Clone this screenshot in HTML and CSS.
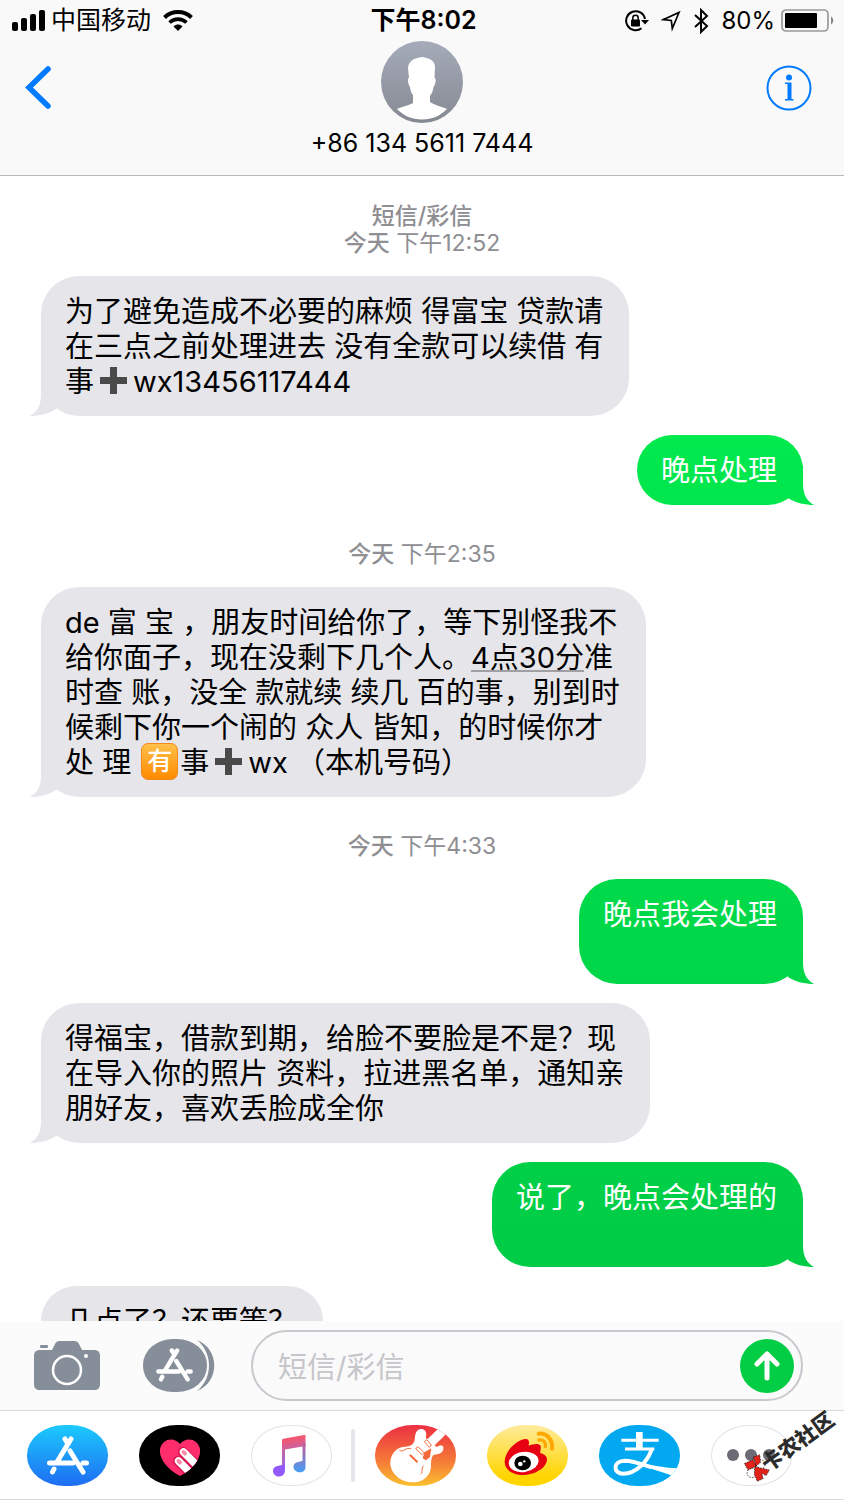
FILE: index.html
```html
<!DOCTYPE html>
<html lang="zh-CN">
<head>
    <meta charset="UTF-8">
    <meta name="viewport" content="width=device-width, initial-scale=1.0">
    <title>短信/彩信</title>
    <link rel="stylesheet" href="styles.css">
</head>
<body>
    <!-- Shared icon shapes -->
    <svg class="defs" aria-hidden="true">
        <symbol id="appstoreMark" viewBox="20 9 42 40">
            <path d="M44 13L30 36M38 13l3 5M43 25l13 21M22.500 37H46M56 37h3.500M27 43l-1.500 3" fill="none" stroke="#fff" stroke-width="5" stroke-linecap="round"/>
        </symbol>
        <symbol id="plusMark" viewBox="0 0 27 27">
            <path d="M10 0h7v10h10v7H17v10h-7V17H0v-7h10z" fill="#4a4a4a"/>
        </symbol>
    </svg>

    <header class="top">
        <div class="status-bar">
            <div class="status-left">
                <svg width="34" height="22" viewBox="0 0 34 22" aria-hidden="true">
                    <rect x="0" y="12" width="6" height="9" rx="2"/>
                    <rect x="9" y="8" width="6" height="13" rx="2"/>
                    <rect x="18" y="4" width="6" height="17" rx="2"/>
                    <rect x="27" y="0" width="6" height="21" rx="2"/>
                </svg>
                <span class="carrier">中国移动</span>
                <svg width="30" height="22" viewBox="0 0 30 22" aria-hidden="true">
                    <path d="M1.500 7.500C9 .300 21 .300 28.500 7.500" fill="none" stroke="#000" stroke-width="4"/>
                    <path d="M6.500 12.500c5-4.500 12-4.500 17 0" fill="none" stroke="#000" stroke-width="3.600"/>
                    <path d="M10.500 16.500c3-2.600 6-2.600 9 0L15 21z"/>
                </svg>
            </div>
            <span class="clock">下午8:02</span>
            <div class="status-right">
                <svg width="24" height="22" viewBox="0 0 24 22" aria-hidden="true">
                    <path d="M16.500 18.200A9.500 9.500 0 1 1 20 9" fill="none" stroke="#000" stroke-width="2"/>
                    <path d="M16 10h8l-4 4.500z"/>
                    <rect x="6" y="9.500" width="9" height="7" rx="1"/>
                    <path d="M7.800 10V8a2.700 2.700 0 0 1 5.400 0v2" fill="none" stroke="#000" stroke-width="1.500"/>
                </svg>
                <svg width="20" height="22" viewBox="0 0 20 22" aria-hidden="true">
                    <path d="M2 9.700L18 2.500 11.300 18.500 10.300 10.500z" fill="none" stroke="#000" stroke-width="1.700"/>
                </svg>
                <svg width="16" height="26" viewBox="0 0 16 26" aria-hidden="true">
                    <path d="M2 7l12 11-6 6V2l6 6L2 19" fill="none" stroke="#000" stroke-width="2"/>
                </svg>
                <span class="percent">80%</span>
                <svg width="54" height="24" viewBox="0 0 54 24" aria-hidden="true">
                    <rect x="1" y="1" width="46" height="21" rx="4" fill="none" stroke="#999" stroke-width="1.700"/>
                    <rect x="4" y="4" width="32" height="15" rx="1"/>
                    <path d="M50 7.500c3 1.500 3 6.500 0 8z" fill="#888"/>
                </svg>
            </div>
        </div>

        <nav class="nav-bar">
            <button type="button" class="nav-button" aria-label="返回">
                <svg width="28" height="44" viewBox="0 0 28 44">
                    <path d="M24 4L5 22.500l19 18.500" fill="none" stroke="#007aff" stroke-width="5.500" stroke-linecap="round"/>
                </svg>
            </button>
            <div class="contact">
                <svg width="82" height="82" viewBox="0 0 82 82" aria-hidden="true">
                    <defs>
                        <linearGradient id="avatarFill" x1="0" y1="0" x2="0" y2="1">
                            <stop offset="0" stop-color="#a5abb9"/>
                            <stop offset="1" stop-color="#858992"/>
                        </linearGradient>
                    </defs>
                    <circle cx="41" cy="41" r="41" fill="url(#avatarFill)"/>
                    <path d="M41 16C49 17 54 20 54 26L53.500 37C55.500 37 55 43 52.500 46C52 50 51 52 49 55V61C53 64 62 66 66 68C59 75 51 78.500 41 78.500S23 75 16 68C20 66 29 64 32 62V54C30 52 29.500 49 29 46C27 43 26 37 28 37L27 27C27.500 20 33 17 41 16Z" fill="#fff"/>
                </svg>
                <span class="number">+86 134 5611 7444</span>
            </div>
            <button type="button" class="nav-button info" aria-label="详细信息">
                <svg width="46" height="46" viewBox="0 0 46 46">
                    <circle cx="23" cy="23" r="21.500" fill="none" stroke="#007aff" stroke-width="2"/>
                    <circle cx="23" cy="12.500" r="3" fill="#007aff"/>
                    <path d="M19 17.500h6.500v16.500H27.500V35.500h-8.500v-1.500h2.500V19H19z" fill="#007aff"/>
                </svg>
            </button>
        </nav>
    </header>

    <main class="chat">
        <p class="stamp"><b>短信/彩信</b><br><b>今天</b> 下午12:52</p>
        <div class="bubble received">为了避免造成不必要的麻烦 得富宝 贷款请<br>在三点之前处理进去 没有全款可以续借 有<br>事<svg class="plus" role="img" aria-label="加"><use href="#plusMark"/></svg>wx13456117444</div>
        <div class="bubble sent">晚点处理</div>

        <p class="stamp"><b>今天</b> 下午2:35</p>
        <div class="bubble received">de 富 宝 ，朋友时间给你了，等下别怪我不<br>给你面子，现在没剩下几个人。<a href="#">4点30分</a>准<br>时查 账，没全 款就续 续几 百的事，别到时<br>候剩下你一个闹的 众人 皆知，的时候你才<br>处 理 <span class="tile">有</span>事<svg class="plus" role="img" aria-label="加"><use href="#plusMark"/></svg>wx （本机号码）</div>

        <p class="stamp"><b>今天</b> 下午4:33</p>
        <div class="bubble sent">晚点我会处理<br><br></div>
        <div class="bubble received">得福宝，借款到期，给脸不要脸是不是？现<br>在导入你的照片 资料，拉进黑名单，通知亲<br>朋好友，喜欢丢脸成全你</div>
        <div class="bubble sent">说了，晚点会处理的<br><br></div>
        <div class="bubble received">几点了？还要等？</div>
    </main>

    <form class="composer">
        <button type="button" class="tool" aria-label="相机">
            <svg width="66" height="50" viewBox="0 0 66 50">
                <path d="M6 9h12l3-6c1-2 2-3 5-3h14c3 0 4 1 5 3l3 6h12c4 0 6 2 6 6v28c0 4-2 6-6 6H6c-4 0-6-2-6-6V15c0-4 2-6 6-6z" fill="#868e99"/>
                <rect x="6" y="4" width="8" height="3" rx="1" fill="#868e99"/>
                <circle cx="33" cy="29" r="14" fill="none" stroke="#fff" stroke-width="2.500"/>
                <circle cx="52" cy="15" r="2" fill="#fff"/>
            </svg>
        </button>
        <button type="button" class="tool apps-toggle" aria-label="App">
            <svg width="72" height="53" viewBox="0 0 72 53">
                <rect width="64" height="53" rx="30" ry="26" fill="#868e99"/>
                <path d="M54 1c23 9 23 42 0 51 16-13 16-38 0-51z" fill="#868e99"/>
                <use href="#appstoreMark" x="13" y="8" width="37" height="35"/>
            </svg>
        </button>
        <div class="field">
            <input type="text" aria-label="短信/彩信" placeholder="短信/彩信">
            <button type="submit" class="send" aria-label="发送">
                <svg width="54" height="54" viewBox="0 0 54 54">
                    <circle cx="27" cy="27" r="27" fill="#03cc45"/>
                    <path d="M27 39V15M17 25l10-10 10 10" fill="none" stroke="#fff" stroke-width="5" stroke-linecap="round" stroke-linejoin="round"/>
                </svg>
            </button>
        </div>
    </form>

    <footer class="app-strip">
        <button type="button" class="app store" aria-label="App Store">
            <svg viewBox="0 0 81 61"><use href="#appstoreMark" x="20" y="10" width="42" height="40"/></svg>
        </button>
        <button type="button" class="app touch" aria-label="Digital Touch">
            <svg viewBox="0 0 81 61">
                <clipPath id="heartClip"><path d="M41 19c4-5 11-6 16-2 7 6 4 16-1 22-4 5-9 9-15 12-6-3-11-7-15-12-5-6-8-16-1-22 5-4 12-3 16 2z"/></clipPath>
                <g clip-path="url(#heartClip)">
                    <rect width="81" height="61" fill="#ff2d6c"/>
                    <path d="M44 27l16 16M39 36l16 16" stroke="#d91550" stroke-width="10" stroke-linecap="round"/>
                    <path d="M44.500 27l16 16M39.500 36l16 16" stroke="#fff" stroke-width="7.500" stroke-linecap="round"/>
                    <path d="M44.500 27l1.500 1.500M39.500 36l1.500 1.500" stroke="#ff8fab" stroke-width="4" stroke-linecap="round"/>
                </g>
            </svg>
        </button>
        <button type="button" class="app light" aria-label="音乐">
            <svg viewBox="0 0 81 61">
                <defs>
                    <linearGradient id="noteFill" gradientUnits="userSpaceOnUse" x1="35" y1="12" x2="41" y2="50">
                        <stop offset="0" stop-color="#fb5366"/>
                        <stop offset=".45" stop-color="#b868b8"/>
                        <stop offset="1" stop-color="#8b62f5"/>
                    </linearGradient>
                    <linearGradient id="stemFill" x1="0" y1="0" x2="0" y2="1">
                        <stop offset="0" stop-color="#c35b95"/>
                        <stop offset="1" stop-color="#459ff8"/>
                    </linearGradient>
                </defs>
                <path d="M31 15.500c0-1 .500-1.500 1.500-1.700L53 10c1 0 1.500 0 1.500 1v10L34 24.500V45h-3z" fill="url(#noteFill)"/>
                <path d="M51.500 18h3v24c0 8-12 6-12 0 0-5 5-5 9-6z" fill="url(#stemFill)"/>
                <path d="M31 40h3v5c0 9-12 8-12 1 0-5 5-5 9-6z" fill="#9459fb"/>
            </svg>
        </button>
        <span class="divider"></span>
        <button type="button" class="app garage" aria-label="库乐队">
            <svg viewBox="15 30 243 183">
                <path d="M61 140C63 112 84 95 106 95C120 95 130 90 134 76C135 54 140 42 154 42C168 43 171 55 167 69L173 72L212 34L234 52L194 91L199 96C207 91 217 89 220 96C222 110 211 119 192 119C184 123 183 138 183 155C181 184 158 203 126 202C88 200 59 172 61 140Z" fill="#fff"/>
                <g fill="none" stroke="#f4693b" stroke-width="3">
                    <path d="M88 106C100 114 108 94 124 102M152 178C160 172 152 162 161 152"/>
                    <path d="M121 121L141 140" stroke-width="6" stroke-linecap="round"/>
                    <path d="M137 101L144 95L162 113L156 119ZM163 80L170 74L184 90L178 97Z"/>
                </g>
                <path d="M163 112L184 100L180 126L168 136L158 130Z" fill="#f4693b"/>
            </svg>
        </button>
        <button type="button" class="app weibo" aria-label="微博">
            <svg viewBox="197 345 243 183">
                <path d="M250 455c0-30 35-67 65-68 12 3 7 16 7 20 13-5 30-9 36 1 2 7-3 17-1 22 13 2 21 10 20 20-3 25-37 45-74 45-31 0-53-17-53-40z" fill="#e60012"/>
                <ellipse cx="307" cy="456" rx="45" ry="30" fill="#fff" transform="rotate(-8 307 456)"/>
                <ellipse cx="304" cy="459" rx="25" ry="22"/>
                <circle cx="297" cy="462" r="7" fill="#fff"/>
                <circle cx="309" cy="454" r="3.500" fill="#fff"/>
                <path d="M352 371c24-3 43 18 40 45" fill="none" stroke="#ffa800" stroke-width="12" stroke-linecap="round"/>
                <path d="M353 390c13-2 21 7 19 20" fill="none" stroke="#ffa800" stroke-width="10" stroke-linecap="round"/>
            </svg>
        </button>
        <button type="button" class="app alipay" aria-label="支付宝">
            <svg viewBox="533 345 243 183">
                <g fill="none" stroke="#fff">
                    <path d="M600 391h112M611 417h88" stroke-width="9"/>
                    <path d="M654 366v50" stroke-width="20"/>
                    <path d="M692 415c-13 42-50 76-86 76-32 0-32-38 4-39 25 0 50 10 80 20" stroke-width="12"/>
                </g>
                <path d="M650 455c40 12 80 18 122 20l-18 22c-40-14-75-25-110-36z" fill="#fff"/>
            </svg>
        </button>
        <button type="button" class="app light" aria-label="更多">
            <svg viewBox="0 0 81 61" fill="#6b6a75">
                <circle cx="22" cy="30" r="6"/><circle cx="40" cy="30" r="6"/><circle cx="58" cy="30" r="6"/>
            </svg>
        </button>
    </footer>

    <div class="watermark">
        <svg width="28" height="28" viewBox="130 163 80 82" aria-hidden="true">
            <g stroke="#111" stroke-width="2" stroke-dasharray="5 3">
                <circle cx="181" cy="193" r="13" fill="#fff"/>
                <circle cx="155" cy="218" r="14" fill="#fff"/>
                <path d="M133 191L158 180L168 198L144 210ZM159 172L178 165L180 188L167 198ZM164 200L206 210L197 226L184 220L188 235L171 243L162 222Z" fill="#e2231a"/>
            </g>
        </svg>
        <span>卡农社区</span>
    </div>
</body>
</html>
```
FILE: styles.css
```css
* {
    box-sizing: border-box;
}
body {
    margin: 0;
    height: 100vh;
    display: flex;
    flex-direction: column;
    position: relative;
    overflow: hidden;
    background-color: #fff;
    color: #000;
    font-family: Inter, "Noto Sans CJK SC", sans-serif;
}
button {
    padding: 0;
    border: none;
    background: none;
    cursor: pointer;
}
svg {
    display: block;
}
.defs {
    position: absolute;
    width: 0;
    height: 0;
}

/* Header */
.top {
    background-color: #f9f9f9;
    border-bottom: 1px solid #b9b9bb;
}
.status-bar {
    display: grid;
    grid-template-columns: 1fr auto 1fr;
    align-items: center;
    height: 41px;
    padding: 0 9px 0 12px;
    font-size: 25px;
    line-height: 41px;
}
.status-left,
.status-right {
    display: flex;
    align-items: center;
}
.carrier {
    margin: 0 12px 0 5px;
}
.clock {
    font-weight: 600;
}
.status-right {
    justify-content: flex-end;
    gap: 12px;
}
.percent {
    margin-right: -6px;
    font-size: 24px;
}
.nav-bar {
    display: flex;
    align-items: flex-start;
    height: 134px;
}
/* equal widths on both sides keep the contact in the middle */
.nav-button {
    flex: 1 1 0;
    min-width: 0;
    display: flex;
    padding: 24px 32px 0 24px;
}
.nav-button.info {
    justify-content: flex-end;
}
.contact {
    display: flex;
    flex-direction: column;
    align-items: center;
}
.number {
    font-size: 25px;
    line-height: 40px;
}

/* Messages */
.chat {
    flex: 1;
    min-height: 0;
    overflow: hidden;
    display: flex;
    flex-direction: column;
    align-items: flex-start;
    gap: 19px;
    padding: 10px 41px 0;
}
.stamp {
    align-self: center;
    margin: 17px 0 0;
    color: #8e8e93;
    font-size: 23px;
    line-height: 27px;
    text-align: center;
}
.stamp b {
    font-weight: 500;
}
.bubble {
    position: relative;
    flex-shrink: 0;
    padding: 18px 26px 17px 24px;
    border-radius: 38px;
    font-size: 29px;
    line-height: 35px;
}
.bubble::after {
    content: "";
    position: absolute;
    bottom: 0;
    width: 28px;
    height: 40px;
    background: inherit;
}
.received {
    background: #e5e5ea;
}
.received::after {
    left: -11px;
    clip-path: path("M11 0V18C11 30 7 36 0 40C9 40 18 38 26 33L28 10Z");
}
.sent {
    align-self: flex-end;
    color: #fff;
    /* one gradient runs down the whole screen behind every sent bubble */
    background: linear-gradient(#00f851, #00c444) fixed;
}
.sent::after {
    right: -11px;
    clip-path: path("M17 0V18C17 30 21 36 28 40C19 40 10 38 2 33L0 10Z");
}
.bubble a {
    color: inherit;
    text-decoration: underline #a0a0a4 2px;
    text-decoration-skip-ink: none;
    text-underline-offset: 2px;
}
.plus {
    display: inline-block;
    width: 27px;
    height: 27px;
    margin: 0 6px;
    vertical-align: -2px;
}
.tile {
    display: inline-block;
    width: 37px;
    height: 37px;
    margin: -6px 2px;
    border: 1px solid #f08a1c;
    border-radius: 7px;
    background: linear-gradient(#ffc04a, #ff8a00);
    color: #fff;
    font-size: 25px;
    font-weight: 500;
    line-height: 34px;
    text-align: center;
    vertical-align: 3px;
}

/* Composer */
.composer {
    display: flex;
    align-items: center;
    height: 90px;
    padding: 0 41px 0 34px;
    background-color: #fbfbfb;
    border-bottom: 1px solid #d9d9dc;
}
.apps-toggle {
    margin: 0 36px 0 43px;
}
.field {
    flex: 1;
    display: flex;
    align-items: center;
    height: 71px;
    padding: 0 7px 0 25px;
    border: 2px solid #c8c8ce;
    border-radius: 36px;
    background-color: #fafafa;
}
.field input {
    flex: 1;
    min-width: 0;
    padding: 3px 0 0;
    border: none;
    outline: none;
    background: none;
    font: inherit;
    font-size: 29px;
    line-height: 35px;
}
.field input::placeholder {
    color: #c5c5ca;
}

/* App strip */
.app-strip {
    display: flex;
    align-items: center;
    gap: 31px;
    height: 89px;
    padding: 0 27px;
    border-bottom: 1px solid #d9d9dc;
}
.app {
    width: 81px;
    height: 61px;
    flex-shrink: 0;
    overflow: hidden;
    border-radius: 38px / 30px;
}
.app svg {
    width: 81px;
    height: 61px;
}
.store {
    background: linear-gradient(#1bcbfd, #1f6cf2);
}
.touch {
    background: #000;
}
.light {
    box-shadow: inset 0 0 0 1px #e3e3e5;
}
.garage {
    background: linear-gradient(#ec2f43, #f57c37 60%, #fbc02f);
}
.weibo {
    background: linear-gradient(#ffeb9c, #ffd500 85%);
}
.alipay {
    background: #02a9f1;
}
.divider {
    width: 4px;
    height: 53px;
    margin: 0 -11px 0 -12px;
    border-radius: 2px;
    background-color: #e5e5ea;
}

.watermark {
    position: absolute;
    right: 0;
    bottom: 20px;
    width: 102px;
    height: 72px;
    color: #2b2b2b;
    font-size: 21px;
    font-weight: 900;
    line-height: 24px;
}
.watermark svg {
    position: absolute;
    left: 1px;
    bottom: -2px;
}
.watermark span {
    position: absolute;
    left: 14px;
    top: 22px;
    white-space: nowrap;
    transform: rotate(-36deg);
}
```
